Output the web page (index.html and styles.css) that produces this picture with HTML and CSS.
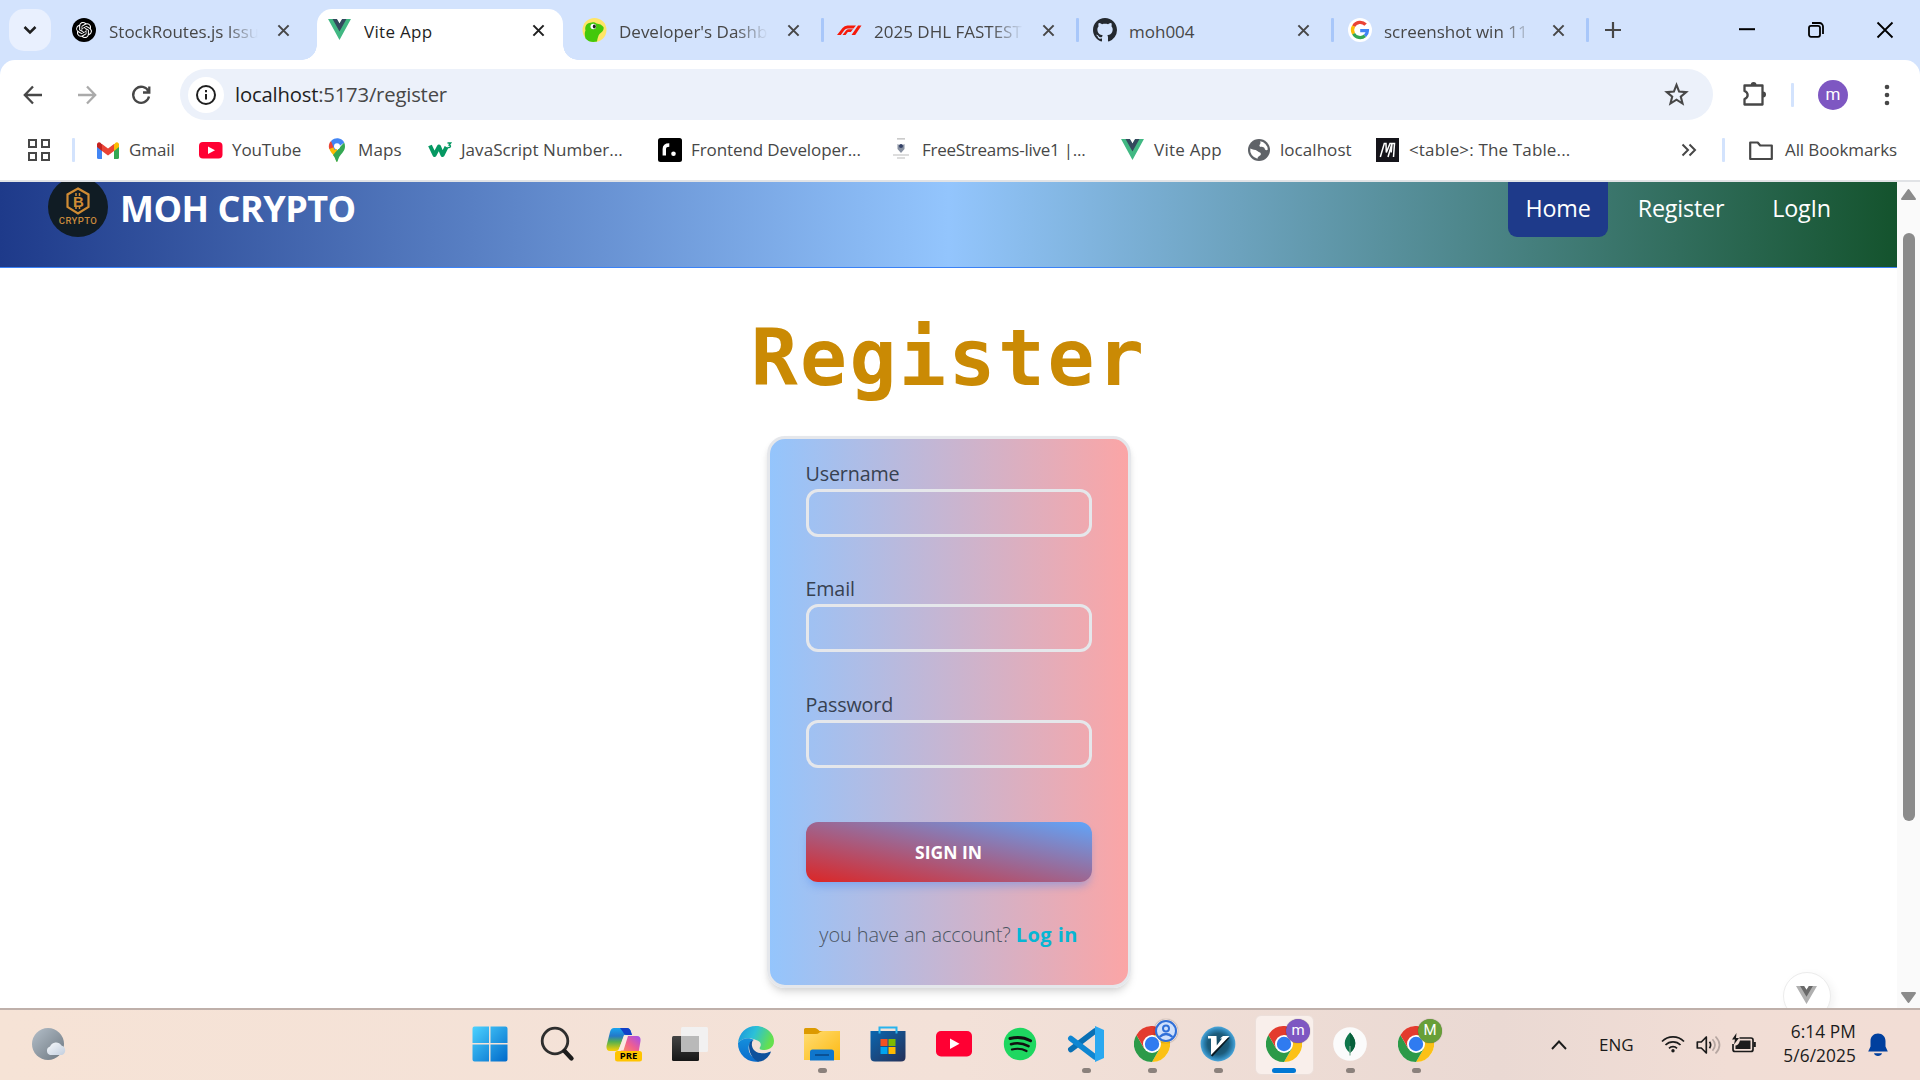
FILE: index.html
```html
<!DOCTYPE html>
<html lang="en">
<head>
<meta charset="utf-8">
<title>Vite App</title>
<link rel="stylesheet" href="styles.css">
</head>
<body>
<svg class="defs" width="0" height="0">
  <defs>
    <symbol id="x" viewBox="0 0 14 14"><path d="M1.5 1.5l11 11M12.5 1.5l-11 11" fill="none" stroke="currentColor" stroke-width="2.2"/></symbol>
    <symbol id="vue" viewBox="0 0 24 22"><path d="M0 0h9l3 5 3-5h9L12 22z" fill="#41b883"/><path d="M4.7 0H9.3L12 4.6 14.7 0h4.6L12 13z" fill="#34495e"/></symbol>
    <symbol id="chrome" viewBox="0 0 36 36">
      <circle cx="18" cy="18" r="18" fill="#fff"/>
      <path d="M18 9h15.6A18 18 0 0 1 18 36l7.8-13.5z" fill="#fbc116"/>
      <path d="M10.2 22.5L2.4 9A18 18 0 0 0 18 36l7.8-13.5z" fill="#2c9a48"/>
      <path d="M18 9h15.6A18 18 0 0 0 2.4 9l7.8 13.5z" fill="#e33b2e"/>
      <circle cx="18" cy="18" r="9" fill="#fff"/><circle cx="18" cy="18" r="7.2" fill="#2f7bf0"/>
    </symbol>
    <linearGradient id="win" x1="0" y1="0" x2="1" y2="1"><stop offset="0" stop-color="#4cd2ff"/><stop offset="1" stop-color="#0069ca"/></linearGradient>
    <linearGradient id="cpA" x1="0" y1="0" x2="0" y2="1"><stop offset="0" stop-color="#18a4f0"/><stop offset=".35" stop-color="#2478c8"/><stop offset=".6" stop-color="#55b04f"/><stop offset="1" stop-color="#ffd000"/></linearGradient>
    <linearGradient id="cpB" x1="1" y1="0" x2="0" y2="1"><stop offset="0" stop-color="#a24df0"/><stop offset=".5" stop-color="#ef5f90"/><stop offset="1" stop-color="#ff9a50"/></linearGradient>
    <linearGradient id="dk" x1="0" y1="0" x2="0" y2="1"><stop offset="0" stop-color="#444"/><stop offset="1" stop-color="#161616"/></linearGradient>
    <linearGradient id="edA" x1="0" y1="0" x2="1" y2=".3"><stop offset="0" stop-color="#1a90dc"/><stop offset=".5" stop-color="#2cc0d8"/><stop offset="1" stop-color="#65e04e"/></linearGradient>
    <linearGradient id="edB" x1="0" y1="0" x2="0" y2="1"><stop offset="0" stop-color="#158fdc"/><stop offset="1" stop-color="#0a6ccc"/></linearGradient>
    <linearGradient id="fo" x1="0" y1="0" x2="1" y2="1"><stop offset="0" stop-color="#ffdd73"/><stop offset="1" stop-color="#fdb912"/></linearGradient>
    <linearGradient id="st" x1="0" y1="0" x2="1" y2="1"><stop offset="0" stop-color="#0b66b0"/><stop offset="1" stop-color="#253058"/></linearGradient>
    <linearGradient id="moon" x1="0" y1="0" x2="1" y2="1"><stop offset="0" stop-color="#b4bfc9"/><stop offset="1" stop-color="#6d7780"/></linearGradient>
    <linearGradient id="cloud" x1="0" y1="0" x2="1" y2="1"><stop offset="0" stop-color="#f8fafc"/><stop offset="1" stop-color="#c2cede"/></linearGradient>
    <radialGradient id="vim"><stop offset="0" stop-color="#154a63"/><stop offset=".6" stop-color="#1c5c7c"/><stop offset=".8" stop-color="#2b7fae"/><stop offset="1" stop-color="#4ba6da"/></radialGradient>
  </defs>
</svg>

<div class="tabstrip">
  <div class="tab-search"><svg width="14" height="10" viewBox="0 0 14 10"><path d="M1.5 2L7 7.5 12.5 2" fill="none" stroke="#1f1f1f" stroke-width="2.5"/></svg></div>
  <div class="tab">
    <svg class="fav" viewBox="0 0 24 24"><circle cx="12" cy="12" r="12"/><path transform="translate(4 4) scale(.667)" fill="#fff" d="M22.2819 9.8211a5.9847 5.9847 0 0 0-.5157-4.9108 6.0462 6.0462 0 0 0-6.5098-2.9A6.0651 6.0651 0 0 0 4.9807 4.1818a5.9847 5.9847 0 0 0-3.9977 2.9 6.0462 6.0462 0 0 0 .7427 7.0966 5.98 5.98 0 0 0 .511 4.9107 6.051 6.051 0 0 0 6.5146 2.9001A5.9847 5.9847 0 0 0 13.2599 24a6.0557 6.0557 0 0 0 5.7718-4.2058 5.9894 5.9894 0 0 0 3.9977-2.9001 6.0557 6.0557 0 0 0-.7475-7.0729zm-9.022 12.6081a4.4755 4.4755 0 0 1-2.8764-1.0408l.1419-.0804 4.7783-2.7582a.7948.7948 0 0 0 .3927-.6813v-6.7369l2.02 1.1686a.071.071 0 0 1 .038.052v5.5826a4.504 4.504 0 0 1-4.4945 4.4944zm-9.6607-4.1254a4.4708 4.4708 0 0 1-.5346-3.0137l.142.0852 4.783 2.7582a.7712.7712 0 0 0 .7806 0l5.8428-3.3685v2.3324a.0804.0804 0 0 1-.0332.0615L9.74 19.9502a4.4992 4.4992 0 0 1-6.1408-1.6464zM2.3408 7.8956a4.485 4.485 0 0 1 2.3655-1.9728V11.6a.7664.7664 0 0 0 .3879.6765l5.8144 3.3543-2.0201 1.1685a.0757.0757 0 0 1-.071 0l-4.8303-2.7865A4.504 4.504 0 0 1 2.3408 7.872zm16.5963 3.8558L13.1038 8.364 15.1192 7.2a.0757.0757 0 0 1 .071 0l4.8303 2.7913a4.4944 4.4944 0 0 1-.6765 8.1042v-5.6772a.79.79 0 0 0-.407-.667zm2.0107-3.0231l-.142-.0852-4.7735-2.7818a.7759.7759 0 0 0-.7854 0L9.409 9.2297V6.8974a.0662.0662 0 0 1 .0284-.0615l4.8303-2.7866a4.4992 4.4992 0 0 1 6.6802 4.66zM8.3065 12.863l-2.02-1.1638a.0804.0804 0 0 1-.038-.0567V6.0742a4.4992 4.4992 0 0 1 7.3757-3.4537l-.142.0805L8.704 5.459a.7948.7948 0 0 0-.3927.6813zm1.0976-2.3654l2.602-1.4998 2.6069 1.4998v2.9994l-2.5974 1.4997-2.6067-1.4997Z"/></svg>
    <span class="title fade">StockRoutes.js Issue</span><svg class="close"><use href="#x"/></svg>
  </div>
  <div class="tab active">
    <svg class="fav" viewBox="0 0 24 24"><use href="#vue" x="1" y="1" width="23" height="21"/></svg>
    <span class="title">Vite App</span><svg class="close"><use href="#x"/></svg>
  </div>
  <div class="tab">
    <svg class="fav" viewBox="0 0 24 24"><circle cx="12.500" cy="12" r="12" fill="#ffe566"/><path d="M3.500 20.500C2.500 17 2.500 14 3.500 12.500 2.500 9 4.500 5 8.500 4.800c2-1 4.500-.6 6 .7 3 .3 5.500 1.500 7 3.500.8 3-1.500 5-4 7-1.500 2-2 4.500-2.500 7.500C10.500 24.500 6.500 24 3.500 20.500z" fill="#43c80a"/><circle cx="11.300" cy="8.500" r="2.800" fill="#fff"/><ellipse cx="12.300" cy="8.500" rx="1.500" ry="2" fill="#222"/></svg>
    <span class="title fade">Developer's Dashboard</span><svg class="close"><use href="#x"/></svg>
  </div>
  <div class="tab sep">
    <svg class="fav" viewBox="0 0 24 24"><path d="M0 17L5.500 10Q7.500 7.500 10.500 7.500H19L16.500 10.500H10.500Q8.500 10.500 7.500 12L3.800 17zM5.500 17L9 12.500Q10 11.300 11.500 11.300H16L13.800 14H10.800L8.600 17zM14.500 17L21 7.500H24.500L18.200 17z" fill="#f61a0a"/></svg>
    <span class="title fade">2025 DHL FASTEST LAP</span><svg class="close"><use href="#x"/></svg>
  </div>
  <div class="tab sep">
    <svg class="fav shift" viewBox="0 0 16 16"><path fill="#24292f" d="M8 0C3.580 0 0 3.580 0 8c0 3.540 2.290 6.530 5.470 7.590.4.070.55-.17.55-.38 0-.19-.01-.82-.01-1.490-2.010.37-2.530-.49-2.690-.94-.09-.23-.48-.94-.82-1.130-.28-.15-.68-.52-.01-.53.63-.01 1.080.58 1.230.82.72 1.210 1.870.87 2.330.66.070-.52.28-.87.51-1.070-1.780-.2-3.640-.89-3.640-3.950 0-.87.31-1.590.82-2.150-.08-.2-.36-1.020.08-2.120 0 0 .67-.21 2.200.82.64-.18 1.320-.27 2-.27s1.360.09 2 .27c1.530-1.040 2.200-.82 2.200-.82.44 1.100.16 1.920.08 2.120.51.56.82 1.270.82 2.150 0 3.070-1.870 3.750-3.650 3.950.29.25.54.73.54 1.480 0 1.070-.01 1.930-.01 2.200 0 .21.15.46.55.38A8.010 8.010 0 0 0 16 8c0-4.420-3.580-8-8-8z"/></svg>
    <span class="title">moh004</span><svg class="close"><use href="#x"/></svg>
  </div>
  <div class="tab sep">
    <svg class="fav shift" viewBox="0 0 24 24"><circle cx="12" cy="12" r="12" fill="#fff"/><g fill="none" stroke-width="3.300"><path d="M17.600 6.700A7.500 7.500 0 0 0 5.600 8.200" stroke="#ea4335"/><path d="M5.600 8.200a7.500 7.500 0 0 0 0 7.600" stroke="#fbbc05"/><path d="M5.600 15.800a7.500 7.500 0 0 0 11.400 2" stroke="#34a853"/><path d="M17 17.800c1.600-1.500 2.400-3.200 2.400-5.100H12.200" stroke="#4285f4"/></g></svg>
    <span class="title fade">screenshot win 11 -</span><svg class="close"><use href="#x"/></svg>
  </div>
  <div class="newtab sep"><svg width="16" height="16" viewBox="0 0 16 16"><path d="M8 0v16M0 8h16" stroke="#474747" stroke-width="2.200"/></svg></div>
  <div class="winctl">
    <svg width="16" height="16" viewBox="0 0 16 16"><path d="M0 7.200h16" stroke="#000" stroke-width="2"/></svg>
    <svg width="16" height="16" viewBox="0 0 16 16" fill="none" stroke="#000" stroke-width="1.800"><rect x="1" y="3.800" width="11" height="11" rx="2"/><path d="M4 1h7.500A3.500 3.500 0 0 1 15 4.500V12"/></svg>
    <svg width="16" height="16" viewBox="0 0 16 16"><path d="M.5 .5l15 15M15.500 .5l-15 15" stroke="#000" stroke-width="1.800"/></svg>
  </div>
</div>

<div class="chrome-body">
<div class="toolbar">
  <svg class="tb" viewBox="0 0 24 24"><path d="M21 12H4M12 3.500L3.800 12l8.200 8.500" stroke="#474747"/></svg>
  <svg class="tb" viewBox="0 0 24 24"><path d="M3 12h17M12 3.500l8.200 8.500-8.200 8.500" stroke="#aaa"/></svg>
  <svg class="tb" viewBox="0 0 24 24"><path d="M19.500 8.500A8 8 0 1 0 20 13.500M20.300 3.500v6H14" stroke="#474747"/></svg>
  <div class="omnibox">
    <div class="info"><svg width="22" height="22" viewBox="0 0 22 22"><circle cx="11" cy="11" r="9" fill="none" stroke="#1f1f1f" stroke-width="2"/><path d="M11 10v5.500M11 6v2.200" stroke="#1f1f1f" stroke-width="2"/></svg></div>
    <div class="url"><b>localhost</b>:5173/register</div>
    <svg class="star" viewBox="0 0 24 24"><path d="M12 2.800l2.500 6.400 6.800.5-5.200 4.300 1.700 6.700-5.800-3.700-5.800 3.700 1.700-6.700L2.700 9.700l6.800-.5z" fill="none" stroke="#474747" stroke-width="2"/></svg>
  </div>
  <svg class="puzzle" viewBox="0 0 26 26"><path d="M3.500 4.500h18v19h-18v-5.500c4.200-1.500 4.200-6.500 0-8z" fill="none" stroke="#474747" stroke-width="2.300" stroke-linejoin="round"/><path d="M9.700 4a2.900 2.900 0 0 1 5.800 0zM22 10.500a3 3 0 0 1 0 6z" fill="#474747"/></svg>
  <i class="vbar"></i>
  <div class="avatar">m</div>
  <svg class="dots" viewBox="0 0 6 22"><g fill="#474747"><circle cx="3" cy="3" r="2.300"/><circle cx="3" cy="11" r="2.300"/><circle cx="3" cy="19" r="2.300"/></g></svg>
</div>

<div class="bookmarks">
  <svg class="apps" viewBox="0 0 22 22" fill="none" stroke="#474747" stroke-width="2"><rect x="1" y="1" width="7" height="7"/><rect x="14" y="1" width="7" height="7"/><rect x="1" y="14" width="7" height="7"/><rect x="14" y="14" width="7" height="7"/></svg>
  <i class="vbar"></i>
  <div class="bm-list">
    <div class="bm"><svg viewBox="0 0 24 24"><path d="M1 6h5v15H2.500A1.500 1.500 0 0 1 1 19.500z" fill="#4285f4"/><path d="M18 6h5v13.500a1.500 1.500 0 0 1-1.500 1.500H18z" fill="#34a853"/><path d="M18 6.500l1.500-1.700A2.200 2.200 0 0 1 23 6.500V9l-5 4z" fill="#fbbc04"/><path d="M6 6.500L4.500 4.800A2.200 2.200 0 0 0 1 6.500V9l5 4z" fill="#c5221f"/><path d="M6 6l6 4.600L18 6v7l-6 4.600L6 13z" fill="#ea4335"/></svg><span>Gmail</span></div>
    <div class="bm"><svg viewBox="0 0 24 24"><rect x="0" y="4" width="23.500" height="16.500" rx="4" fill="#ff0033"/><path d="M9 8.500l7 3.700-7 3.700z" fill="#fff"/></svg><span>YouTube</span></div>
    <div class="bm"><svg viewBox="0 0 24 24"><path d="M12 24c-.8 0-1-3-2.500-5.500C7.500 15.300 4 13 4 8.200L12 8z" fill="#fbbc04"/><path d="M12 24c.8 0 1-3 2.500-5.500 2-3.200 5.500-5.500 5.500-10.300 0-1.500-.3-2.700-.9-3.800L8 17c2.500 3 3 7 4 7z" fill="#34a853"/><path d="M6 3L12 8 4.300 11A8 8 0 0 1 6 3z" fill="#ea4335"/><path d="M6 3a8 8 0 0 1 13.200 1.500L9.500 12z" fill="#4285f4"/><circle cx="12" cy="8.200" r="3" fill="#fff"/></svg><span class="wide">Maps</span></div>
    <div class="bm"><svg viewBox="0 0 24 24"><path d="M2 7.500L6.500 17 11 8.500 14.500 17 18.500 9" fill="none" stroke="#059862" stroke-width="4" stroke-linejoin="round"/><path d="M19.500 5h3.200l-1.500 2c2 .2 1.800 3.200-1.800 2.500" fill="none" stroke="#059862" stroke-width="1.400"/></svg><span class="mid">JavaScript Number...</span></div>
    <div class="bm"><svg viewBox="0 0 24 24"><rect width="24" height="24" rx="2.500"/><path d="M6.300 17.500V11q0-4 5-4" fill="none" stroke="#fff" stroke-width="3.400"/><circle cx="15.500" cy="15.700" r="2.300" fill="#fff"/></svg><span>Frontend Developer...</span></div>
    <div class="bm"><svg viewBox="0 0 24 24"><path d="M8 .8h8M4 17h16M8 20h8" stroke="#bbb" stroke-width="1.200"/><path d="M8.500 6l3.500 2 3.500-2v5L12 15l-3.500-4z" fill="#8790a0"/><circle cx="12" cy="8" r="2" fill="#334066"/></svg><span class="tight">FreeStreams-live1 |...</span></div>
    <div class="bm"><svg viewBox="0 0 24 24"><use href="#vue" x="0" y="1" width="23" height="21"/></svg><span class="vite">Vite App</span></div>
    <div class="bm"><svg viewBox="0 0 24 24"><circle cx="12" cy="12" r="11" fill="#5f6368"/><path d="M13 3.300a8.800 8.800 0 0 1 7.800 8.200c-1.600 2-3.300-.2-3.300-1.500-1-1.500-4.500-.5-5-2s2-2.200.5-4.700zM3.300 10.500c2.500 1.700 5 .5 7 2.500s4 1 3.500 3.500c-1 2-3 1.500-3.300 4.200A8.800 8.800 0 0 1 3.300 10.500z" fill="#fff"/></svg><span class="mid">localhost</span></div>
    <div class="bm"><svg viewBox="0 0 24 24"><rect width="23" height="24" fill="#15141a"/><path d="M4.300 19L8.300 5.500h1.700l.3 9 3.700-9h2l-.8 9M12 19l4-13.500h2.500L17.500 19" fill="none" stroke="#fff" stroke-width="1.500"/></svg><span class="wide">&lt;table&gt;: The Table...</span></div>
  </div>
  <svg class="more" viewBox="0 0 16 14"><path d="M1.500 1.500L7 7l-5.500 5.500M8.500 1.500L14 7l-5.500 5.500" fill="none" stroke="#474747" stroke-width="2"/></svg>
  <i class="vbar"></i>
  <div class="bm all"><svg viewBox="0 0 24 24"><path d="M1.200 4.500h7.500l2.500 3h11.600V21H1.200z" fill="none" stroke="#474747" stroke-width="2.200" stroke-linejoin="round"/></svg><span>All Bookmarks</span></div>
</div>
</div>

<div class="viewport">
  <div class="page">
    <header class="site">
      <svg class="logo" viewBox="0 0 60 60"><circle cx="30" cy="30" r="30" fill="#101c24"/><path d="M30 11.500l10.500 6v12.500L30 36.500l-10.500-6.500v-12.500z" fill="none" stroke="#d08c34" stroke-width="2.200"/><text x="30.500" y="29.800" class="coin">B</text><path d="M28 16v3M31.500 16v3M28 29V32M31.500 29V32" stroke="#d08c34" stroke-width="1.500"/><text x="30" y="47" class="word">CRYPTO</text></svg>
      <h2 class="brand">MOH CRYPTO</h2>
      <nav><a class="home">Home</a><a class="reg">Register</a><a class="login">LogIn</a></nav>
    </header>
    <h1>Register</h1>
    <form class="card">
      <label>Username</label><div class="field"></div>
      <label>Email</label><div class="field"></div>
      <label>Password</label><div class="field"></div>
      <div class="btn">SIGN IN</div>
      <p><span class="ask">you have an account?</span> <a>Log in</a></p>
    </form>
    <div class="devtool"><svg width="21" height="18" viewBox="0 0 24 22" preserveAspectRatio="none"><path d="M0 0h9l3 5 3-5h9L12 22z" fill="#b0b0b0"/><path d="M4.700 0H9.300L12 4.600 14.700 0h4.600L12 13z" fill="#6a6a6a"/></svg></div>
  </div>
  <div class="scroll"><svg width="15" height="11" viewBox="0 0 15 11"><path d="M7.500 1L14 10H1z" fill="#8b8b8b" stroke="#8b8b8b" stroke-linejoin="round" stroke-width="2"/></svg><i></i><svg width="15" height="11" viewBox="0 0 15 11"><path d="M7.500 10L14 1H1z" fill="#8b8b8b" stroke="#8b8b8b" stroke-linejoin="round" stroke-width="2"/></svg></div>
</div>

<div class="taskbar">
  <svg class="weather" viewBox="0 0 34 32"><circle cx="16" cy="16" r="16" fill="url(#moon)"/><path d="M18 27a4.500 4.500 0 0 1 0-8.500 6.500 6.500 0 0 1 11.500-1A5 5 0 0 1 30 27z" fill="url(#cloud)"/></svg>
  <div class="apps-row">
    <div><svg viewBox="0 0 36 36"><g fill="url(#win)"><path d="M.5 2.500a2 2 0 0 1 2-2H17V17H.5zM18.500.5H33.500a2 2 0 0 1 2 2V17h-17zM.5 18.500H17v17H2.500a2 2 0 0 1-2-2zM18.500 18.500h17v15a2 2 0 0 1-2 2h-15z"/></g></svg></div>
    <div><svg viewBox="0 0 36 36"><circle cx="15" cy="15" r="12.800" fill="none" stroke="#2e2e2e" stroke-width="2.800"/><path d="M24.500 25l7 7.500" stroke="#1c1c1c" stroke-width="4.400" stroke-linecap="round"/></svg></div>
    <div><svg viewBox="0 0 36 36"><path d="M8 2h13q3 0 4 4l1 3h-8l-5 14q-1 2-3 2H4q-4 0-3.500-5L4 6q1-4 4-4z" fill="url(#cpA)"/><path d="M14 2h7q3 0 4 4l1 3h-5q-3 0-4-3z" fill="#123fc8"/><path d="M20 10h11q4 0 3.500 5l-2 12H14z" fill="url(#cpB)"/><path d="M18 10h4l-4.500 14.500h-5z" fill="#fbe9e2"/><rect x="9" y="25" width="27" height="10.500" rx="2.500" fill="#ffc400"/><text x="22.500" y="33.300" class="pre">PRE</text></svg></div>
    <div><svg viewBox="0 0 36 36"><rect x="0" y="10" width="27" height="25" rx="1.500" fill="url(#dk)"/><rect x="9" y="1" width="27" height="25" rx="1.500" fill="#f2f2f2" fill-opacity=".97"/><path d="M9 10h18v16H9z" fill="#b9b9b9"/></svg></div>
    <div><svg viewBox="0 0 36 36"><path d="M0 17C1 7 8 0 18 0s18 7 18 15-7 9-11 9c-3 0-4-1-3-3 2-3 0-6-4-7C11 11 4 12 0 17z" fill="url(#edA)"/><path d="M0 17c4-5 11-6 16-3-5 2-6 6-5 11 1 4 5 8 10 10.500A18 18 0 0 1 0 17z" fill="url(#edB)"/><path d="M11 20c0-3 1-5 4-6-3 5 0 12 7 13 4 1 8-.5 11-1.500-2 6-8 10.500-13 10.300C14 33 11 26 11 20z" fill="#0d519c"/></svg></div>
    <div class="run"><svg viewBox="0 0 36 36"><path d="M0 3.500Q0 2 1.500 2H11q1.500 0 3 1.500L15.500 5H34.500Q36 5 36 6.500V20H0z" fill="#dc9a00"/><path d="M0 8h12q2 0 3.500-1.500T19 5h17v29H0z" fill="url(#fo)"/><path d="M6 34.500V26q0-2.500 2.500-2.500h19q2.500 0 2.500 2.500v8.500z" fill="#0f76cc"/><path d="M11 29h14" stroke="#0a4b8c" stroke-width="1.700"/></svg></div>
    <div><svg viewBox="0 0 36 36"><path d="M9.500 8V1.500h17V8" fill="none" stroke="#28b4ee" stroke-width="2"/><path d="M.5 5h35v26q0 4.500-4.500 4.500H5Q.5 35.500.5 31z" fill="url(#st)"/><path d="M9.500 5v2.500M26.500 5v2.500" stroke="#28b4ee" stroke-width="2"/><path d="M10.500 13h7v7h-7z" fill="#f25022"/><path d="M18.500 13h7v7h-7z" fill="#7fba00"/><path d="M10.500 21h7v7h-7z" fill="#00a4ef"/><path d="M18.500 21h7v7h-7z" fill="#ffb900"/></svg></div>
    <div><svg viewBox="0 0 36 36"><rect x="0" y="5" width="36" height="25.500" rx="5" fill="#ff0033"/><path d="M14 12.500l9.500 5.300-9.500 5.300z" fill="#fff"/></svg></div>
    <div><svg viewBox="0 0 36 36"><circle cx="18" cy="18" r="16.200" fill="#1ed760"/><g fill="none" stroke="#111" stroke-linecap="round"><path d="M8 12.500q11-3 20.500 2.200" stroke-width="3"/><path d="M9 18.200q9-2.600 17.500 2" stroke-width="2.600"/><path d="M10 23.500q8-2 14.500 1.500" stroke-width="2.200"/></g></svg></div>
    <div class="run"><svg viewBox="0 0 36 36"><path d="M2.800 23.500L27 5" stroke="#0a70b4" stroke-width="5.500" stroke-linecap="round"/><path d="M2.800 12.500L27 31" stroke="#0f86d2" stroke-width="5.500" stroke-linecap="round"/><path d="M27 0l9 4v28l-9 4z" fill="#2aa8f0"/></svg></div>
    <div class="run"><svg viewBox="0 0 36 36"><use href="#chrome"/></svg><span class="badge person"><svg viewBox="0 0 24 24"><circle cx="12" cy="12" r="10" fill="#cfe0fb" stroke="#2f6fd8" stroke-width="2"/><circle cx="12" cy="9.500" r="3" fill="none" stroke="#2f6fd8" stroke-width="2"/><path d="M5.500 18q6.500-6 13 0" fill="none" stroke="#2f6fd8" stroke-width="2.200"/></svg></span></div>
    <div class="run"><svg viewBox="0 0 36 36"><circle cx="18" cy="18" r="17.400" fill="url(#vim)"/><path d="M12 14l3 10L27 12l3-.5L12.500 30.500l-1.500-1z" fill="#0a1a22"/><path d="M8 10h8.500l.3 9.500L22 12.500h-2l3-2.500h6.500L11 29V12.500H8z" fill="#fff"/></svg></div>
    <div class="run on"><svg viewBox="0 0 36 36"><use href="#chrome"/></svg><span class="badge purple">m</span></div>
    <div class="run"><svg viewBox="0 0 36 36"><circle cx="18" cy="18" r="16.800" fill="#fbfbfb"/><path d="M18 6.500c7 7 7 15 0 20.500-7-5.500-7-13.500 0-20.500z" fill="#10774c"/><path d="M18 6.500c7 7 7 15 0 20.500z" fill="#075f3a"/><path d="M18 20v9.500" stroke="#7fae96" stroke-width="1.200"/></svg></div>
    <div class="run"><svg viewBox="0 0 36 36"><use href="#chrome"/></svg><span class="badge green">M</span></div>
  </div>
  <div class="tray">
    <svg class="chev" viewBox="0 0 16 10"><path d="M1 9l7-7.500L15 9" fill="none" stroke="#1b1b1b" stroke-width="1.900"/></svg>
    <span class="lang">ENG</span>
    <svg class="wifi" viewBox="0 0 24 18" fill="none" stroke="#1b1b1b" stroke-width="1.700"><path d="M1 6.500a15.500 15.500 0 0 1 22 0M4.500 10a10.500 10.500 0 0 1 15 0M8 13.300a5.700 5.700 0 0 1 8 0"/><circle cx="12" cy="15.700" r="1.700" fill="#1b1b1b" stroke="none"/></svg>
    <svg class="vol" viewBox="0 0 25 20" fill="none" stroke="#1b1b1b" stroke-width="1.700"><path d="M1.300 7h4l5-5v16l-5-5h-4z" stroke-linejoin="round"/><path d="M13.500 6.800q2.300 3.200 0 6.400"/><path d="M16.500 4.300q5 5.700 0 11.400M19.500 1.500q8 8.500 0 17" stroke="#b5a6a1"/></svg>
    <svg class="bat" viewBox="0 0 25 20"><path d="M7.500 5H19q2 0 2 2v9.500q0 2-2 2H3q-2 0-2-2V11" fill="none" stroke="#1b1b1b" stroke-width="1.700"/><path d="M8 7.500h10.500v8.500H3.500v-3.500q3 0 4.500-5z" fill="#1b1b1b"/><path d="M4.500 0L0 6.500h3L2 11.500l5-6.500H4z" fill="#1b1b1b"/><path d="M21.500 9h2.300v5h-2.300z" fill="#1b1b1b"/></svg>
    <div class="clock"><span>6:14 PM</span><span>5/6/2025</span></div>
    <svg class="bell" viewBox="0 0 20 24"><path d="M10 .5c4.500 0 7.500 3.300 7.500 7.500v5.500l2.300 5H.2l2.300-5V8C2.500 3.800 5.500.5 10 .5zM6 20.300h8c-.5 1.700-2 2.700-4 2.700s-3.500-1-4-2.700z" fill="#003f9e"/></svg>
  </div>
</div>
</body>
</html>
```
FILE: styles.css
```css
* { box-sizing: border-box; }
body {
  margin: 0; width: 1920px; height: 1080px; overflow: hidden;
  display: flex; flex-direction: column;
  font-family: "Open Sans", "Noto Sans", sans-serif; background: #d3e3fd; color: #1f1f1f;
}
svg { display: block; flex: none; overflow: visible; }
.defs { position: absolute; }

/* tab strip */
.tabstrip { height: 60px; display: flex; background: #d3e3fd; flex: none; }
.tab-search { width: 42px; height: 42px; margin: 9px 6px 0 9px; border-radius: 15px; background: #e9f0fe; display: grid; place-items: center; }
.tab { width: 255px; height: 60px; padding: 0 21px 0 15px; display: flex; align-items: center; position: relative; color: #474747; }
.fav { width: 24px; height: 24px; margin-right: 13px; }
.fav.shift { margin: 0 12px 0 1px; }
.title { width: 149px; font-size: 17px; letter-spacing: 0; line-height: 24px; white-space: nowrap; overflow: hidden; margin-top: 3px; }
.fade { -webkit-mask-image: linear-gradient(90deg, #000 78%, transparent 100%); mask-image: linear-gradient(90deg, #000 78%, transparent 100%); }
.close { width: 13px; height: 13px; margin-left: 19px; }
.active { color: #1f1f1f; z-index: 1; isolation: isolate; }
.active .title { letter-spacing: .3px; }
.active::before { content: ""; position: absolute; z-index: -1; left: 5px; right: 4px; top: 9px; bottom: 0; background: #fff; border-radius: 15px 15px 0 0; }
.active::after { content: ""; position: absolute; z-index: -1; left: -10px; right: -11px; bottom: 0; height: 15px;
  background: radial-gradient(circle at 0 0, transparent 14.5px, #fff 15px) left / 15px 15px no-repeat, radial-gradient(circle at 100% 0, transparent 14.5px, #fff 15px) right / 15px 15px no-repeat; }
.sep { position: relative; }
.sep::before { content: ""; position: absolute; left: -1px; top: 18px; width: 3px; height: 24px; border-radius: 1px; background: #a8c7fa; }
.newtab { width: 52px; display: grid; place-items: center; }
.winctl { margin-left: auto; display: flex; align-items: center; gap: 53px; padding-right: 27px; }

/* toolbar */
.chrome-body { background: #fff; border-radius: 15px 15px 0 0; flex: none; height: 122px; border-bottom: 2px solid #e1e3e6; }
.toolbar { height: 69px; display: flex; align-items: center; padding-left: 21px; }
.tb { width: 24px; height: 24px; margin-right: 30px; fill: none; stroke-width: 2.3; }
.omnibox { width: 1533px; height: 51px; margin-left: -3px; border-radius: 26px; background: #ecf1fa; display: flex; align-items: center; padding: 0 24px 0 8px; }
.info { width: 36px; height: 36px; border-radius: 50%; background: #fff; display: grid; place-items: center; }
.url { font-size: 20.3px; line-height: 26px; letter-spacing: -.2px; margin: -1px 0 0 11px; color: #474747; flex: 1; }
.url b { font-weight: 400; color: #1f1f1f; }
.star { width: 25px; height: 25px; }
.puzzle { width: 26px; height: 26px; margin: -2px 24px 0 28px; }
.vbar { width: 3px; height: 24px; border-radius: 1px; background: #d3e3fd; flex: none; }
.avatar { width: 30px; height: 30px; margin-left: 24px; border-radius: 50%; background: #7e57c2; color: #fff; font: 17px/28px Roboto, sans-serif; text-align: center; }
.dots { width: 6px; height: 22px; margin-left: 36px; }

/* bookmarks bar */
.bookmarks { height: 42px; display: flex; align-items: center; padding-left: 28px; color: #474747; }
.apps { width: 22px; height: 22px; margin-right: 22px; }
.bm-list { width: 1584px; padding-left: 21px; display: grid; grid-template-columns: 103px 126px 103px 230px 231px 232px 126px 129px 1fr; }
.bm { display: flex; align-items: center; gap: 9px; font-size: 17px; letter-spacing: -.1px; line-height: 24px; white-space: nowrap; }
.bm svg { width: 24px; height: 24px; }
.bm .wide { letter-spacing: .15px; }
.bm .mid { letter-spacing: .05px; }
.bm .vite { letter-spacing: .25px; }
.bm .tight { letter-spacing: -.25px; }
.more { width: 16px; height: 14px; margin: 0 25px 0 22px; }
.all { margin-left: 24px; gap: 12px; }

/* page */
.viewport { height: 826px; flex: none; display: flex; background: #fff; }
.page { width: 1897px; height: 826px; overflow: hidden; position: relative; display: flex; flex-direction: column; align-items: center; }
.site { width: 100%; height: 86px; flex: none; display: flex; border-bottom: 1px solid #3b82f6; padding-left: 48px; background: linear-gradient(90deg, #1e3a8a, #93c5fd 50%, #14532d); color: #fff; }
.logo { width: 60px; height: 60px; margin-top: -5px; }
.coin { font: 700 15px "Liberation Sans", sans-serif; fill: #d08c34; text-anchor: middle; }
.word { font: 500 9.5px Roboto, sans-serif; letter-spacing: .4px; fill: #c98a3c; text-anchor: middle; }
.brand { margin: 0 0 0 12px; font-size: 36px; line-height: 53px; font-weight: 700; letter-spacing: -.5px; }
nav { margin-left: auto; display: flex; margin-right: 48px; font-size: 23.3px; line-height: 53px; height: 55px; }
nav a { text-align: center; letter-spacing: -.2px; }
.home { width: 100px; background: #1e3a8a; border-radius: 0 0 9px 9px; }
.reg { width: 146px; }
.login { width: 95px; }
h1 { margin: 43px 0 0; height: 125px; font: 700 78px/94px "DejaVu Sans Mono", monospace; letter-spacing: 2.500px; color: #ca8a04; }
.card { width: 364px; height: 552px; border: 3px solid #e5e7eb; border-radius: 18px; padding: 19px 36px; background: linear-gradient(90deg, #93c5fd, #fca5a5); background-origin: border-box; box-shadow: 0 6px 9px -1px rgba(0,0,0,.1), 0 3px 6px -2px rgba(0,0,0,.1); }
.card label { display: block; font-size: 19.700px; letter-spacing: -.15px; line-height: 31px; color: #374151; }
.field { width: 286px; height: 48px; border: 3px solid #e5e7eb; border-radius: 12px; margin-bottom: 36.400px; }
.btn { height: 60px; margin-top: 54px; border-radius: 12px; background: linear-gradient(to top right, #dc2626, #60a5fa); box-shadow: 0 6px 9px -2px rgba(59,130,246,.4); color: #fff; font-weight: 700; font-size: 17.5px; line-height: 61px; text-align: center; }
.card p { margin: 38px 0 0; text-align: center; font-size: 20px; line-height: 30px; white-space: nowrap; }
.ask { font-weight: 300; color: #4b5563; letter-spacing: -.1px; }
.card p a { font-weight: 700; color: #06b6d4; letter-spacing: .4px; }
.devtool { position: absolute; left: 1783px; top: 790px; width: 48px; height: 48px; border-radius: 50%; background: #fff; border: 1px solid #ececec; box-shadow: 3px 3px 10px rgba(0,0,0,.06); padding: 13px 0 0 12px; }
.scroll { width: 23px; background: #fafafa; display: flex; flex-direction: column; align-items: center; padding: 7px 0 5px; }
.scroll i { width: 12px; height: 588px; margin: 33px 0 auto; border-radius: 6px; background: #8b8b8b; }

/* taskbar */
.taskbar { height: 72px; flex: none; border-top: 2px solid #bfb0aa; background: linear-gradient(90deg, #f6e3d6, #f3e1d8 50%, #ead9d3 78%, #f1ddd5 90%, #f2ddd5); display: flex; }
.weather { width: 34px; height: 32px; margin: 18px 0 0 32px; }
.apps-row { display: flex; margin-left: 391px; }
.apps-row > div { width: 66px; height: 70px; padding: 16px 15px; position: relative; }
.apps-row > div:first-child { margin-right: 2px; }
.apps-row > div > svg { width: 36px; height: 36px; position: relative; }
.pre { font: 700 9.500px "Open Sans", sans-serif; text-anchor: middle; }
.run::after { content: ""; position: absolute; left: 29px; top: 58px; width: 9px; height: 5px; border-radius: 3px; background: #8b817c; }
.on::before { content: ""; position: absolute; left: 4px; top: 5px; width: 57px; height: 58px; border-radius: 6px; background: #f9efeb; border: 1px solid #ecdfda; }
.run.on::after { left: 21px; width: 24px; background: #0078d4; }
.badge { position: absolute; left: 35px; top: 9px; width: 24px; height: 24px; border-radius: 50%; color: #fff; font: 15px/23px Roboto, sans-serif; text-align: center; box-shadow: 0 0 1px rgba(0,0,0,.5); }
.purple { background: #7e57c2; }
.green { background: #689f38; }
.tray { margin-left: auto; display: flex; align-items: center; padding-right: 32px; color: #1b1b1b; }
.chev { width: 16px; height: 10px; margin: -1px 32px 0 0; }
.lang { width: 36px; font-size: 17px; letter-spacing: 0; margin-top: -2px; }
.wifi { width: 24px; height: 18px; margin: -2px 0 0 26px; }
.vol { width: 25px; height: 20px; margin: -1px 0 0 11px; }
.bat { width: 25px; height: 20px; margin: -4px 0 0 11px; }
.clock { width: 85px; margin: -3px 0 0 14px; display: flex; flex-direction: column; align-items: flex-end; font-size: 17.300px; line-height: 24px; letter-spacing: .1px; white-space: nowrap; }
.bell { width: 20px; height: 24px; margin-left: 12px; }
```
